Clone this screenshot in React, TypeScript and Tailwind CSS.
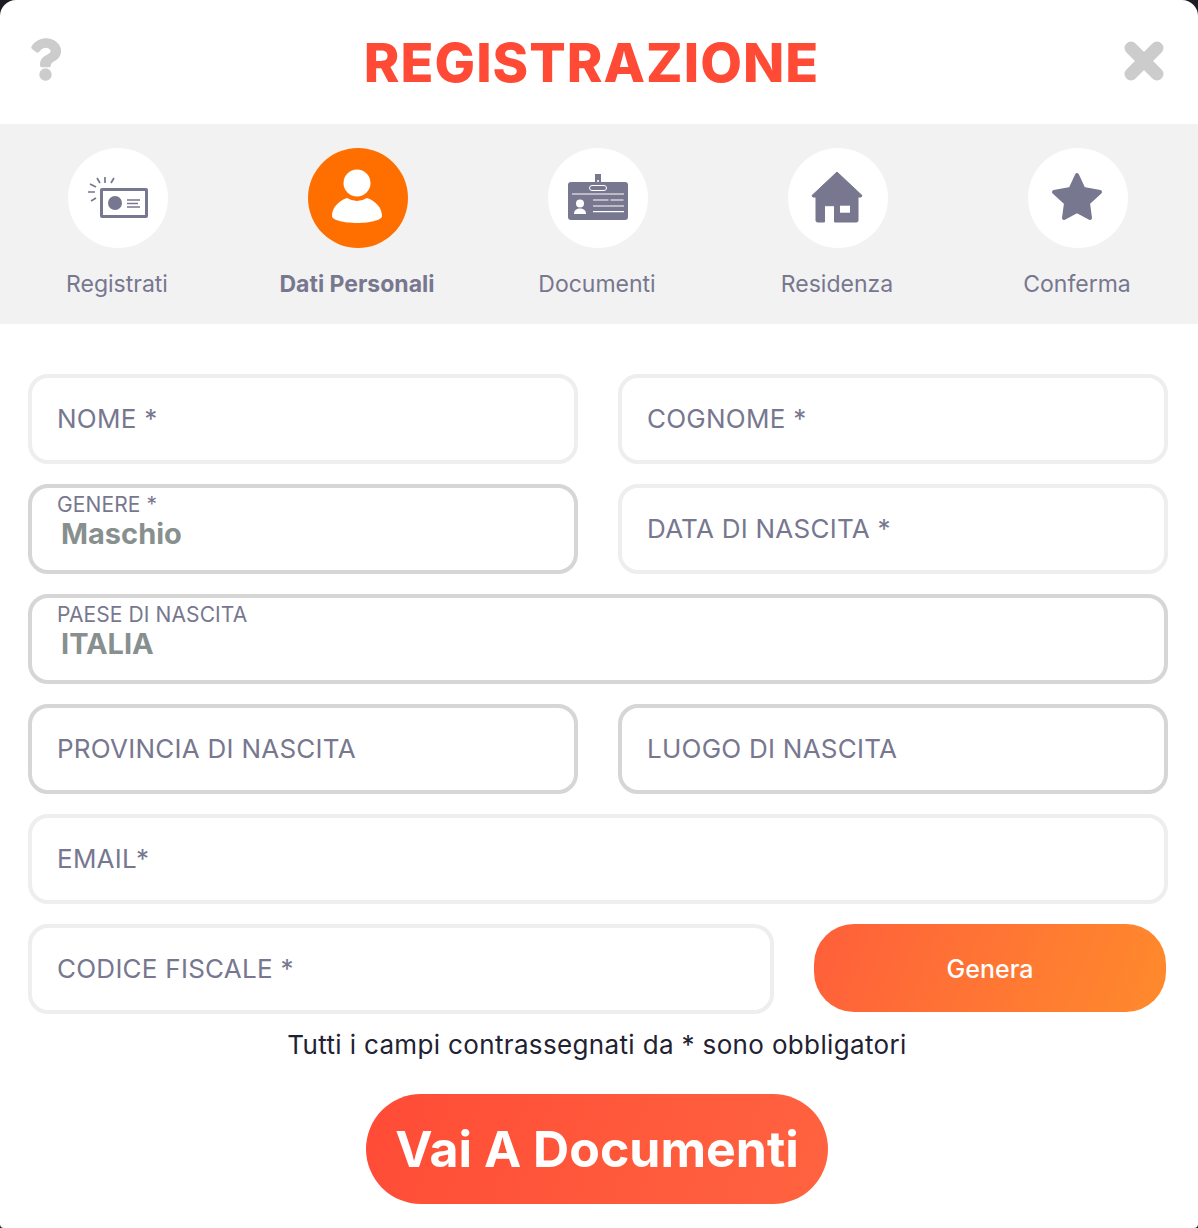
import { FaQuestion } from 'react-icons/fa';

const steps = ['Registrati', 'Dati Personali', 'Documenti', 'Residenza', 'Conferma'];

function RegistratiIcon() {
  return (
    <svg viewBox="0 0 100 100" className="w-[100px] h-[100px]" fill="none" stroke="#77778f">
      <rect x="33.5" y="41.5" width="45" height="27" rx="0.5" strokeWidth="3" />
      <circle cx="47" cy="55" r="7" fill="#77778f" stroke="none" />
      <path d="M59 52h13M59 55.5h11M59 59h13" strokeWidth="1.5" />
      <path d="M37 29v6M29 30l3 5M46 30l-3 5M22 36l6 3M20 44h7M23 53l5-3" strokeWidth="1.7" />
    </svg>
  );
}

function UserIcon() {
  return (
    <svg viewBox="0 0 100 100" className="w-[100px] h-[100px]" fill="#fff">
      <circle cx="49" cy="35" r="13.5" />
      <path d="M39 50Q49 56 59 50C68 53 74 60 74 68C74 72 62 75 49 75C36 75 24 72 24 68C24 60 30 53 39 50Z" />
    </svg>
  );
}

function DocumentIcon() {
  return (
    <svg viewBox="0 0 100 100" className="w-[100px] h-[100px]">
      <rect x="20" y="34" width="60" height="38" rx="3" fill="#77778f" />
      <rect x="47" y="26" width="6" height="12" fill="#77778f" />
      <rect x="49.2" y="32" width="1.6" height="2" fill="#fff" />
      <rect x="41.5" y="37.5" width="17" height="5" rx="2.5" fill="#77778f" stroke="#fff" strokeWidth="1" />
      <path d="M24 46h52M45 52h15.5M62.5 52h13M45 58h31M45 63.7h31" stroke="#fff" strokeWidth="1.2" fill="none" />
      <circle cx="32" cy="55.5" r="4" fill="#fff" />
      <path d="M26 66C26 62 29 60.5 32 60.5C35 60.5 38 62 38 66Z" fill="#fff" />
    </svg>
  );
}

function HomeIcon() {
  return (
    <svg viewBox="0 0 100 100" className="w-[100px] h-[100px]" fill="#77778f">
      <path d="M49 24L74 47.5L73 49L70 49V72.5Q70 74 68.5 74H46.5V57.7H36.5V74H29.5Q28 74 28 72.5V49L25 49L24 47.5Z" stroke="#77778f" strokeLinejoin="round" />
      <rect x="52" y="57.7" width="10" height="7" fill="#fff" />
    </svg>
  );
}

function StarIcon() {
  return (
    <svg viewBox="0 0 100 100" className="w-[100px] h-[100px]" fill="#77778f" stroke="#77778f" strokeWidth="4" strokeLinejoin="round">
      <path d="M49 27L55.5 41L72 44L60 55L62 70L49 63L36 70L38 55L26 44L42.5 41Z" />
    </svg>
  );
}

const icons = [RegistratiIcon, UserIcon, DocumentIcon, HomeIcon, StarIcon];

function Field({ label, value, strong, className }: { label: string; value?: string; strong?: boolean; className?: string }) {
  return (
    <div className={`h-[90px] rounded-[20px] border-4 pl-[25px] bg-white ${strong ? 'border-[#d6d6d6]' : 'border-[#eeeeee]'} ${className ?? ''}`}>
      {value ? (
        <div className="flex flex-col pt-[5px]">
          <span className="text-[21px] leading-[24px] text-[#77778f] tracking-[0.1px]">{label}</span>
          <span className="ml-[4px] text-[29px] leading-[33px] font-bold text-[#87908f]">{value}</span>
        </div>
      ) : (
        <div className="h-full flex items-center pb-[2px] text-[26px] text-[#77778f] tracking-[0.25px]">{label}</div>
      )}
    </div>
  );
}

export default function App() {
  return (
    <div className="w-[1198px] h-[1228px] bg-[#1b1c26] font-['Inter',sans-serif] overflow-hidden">
      <div className="w-full h-full bg-white rounded-t-[16px] rounded-b-[4px] overflow-hidden">
        <div className="h-[124px] flex items-center justify-between pl-[30px] pr-[34px]">
          <FaQuestion className="w-[31px] h-[43px] text-[#cccccc] mb-[5px]" stroke="currentColor" strokeWidth="16" />
          <h1 className="text-[54px] tracking-[1px] font-extrabold text-[#ff4a36] leading-none mr-[2px] pt-[2px]">REGISTRAZIONE</h1>
          <svg viewBox="0 0 40 40" className="w-[40px] h-[40px] mb-[2px]" stroke="#cccccc" strokeWidth="13" strokeLinecap="round">
            <path d="M7 7L33 33M33 7L7 33" />
          </svg>
        </div>

        <div className="h-[200px] bg-[#f2f2f2] pt-[24px] flex ml-[-2px] w-[1200px]">
          {steps.map((step, i) => {
            const Icon = icons[i];
            return (
              <div key={step} className="w-[240px] flex flex-col items-center">
                <div className={`w-[100px] h-[100px] rounded-full ${i === 1 ? 'bg-[#ff6f00]' : 'bg-white'}`}>
                  <Icon />
                </div>
                <span className={`mt-[22px] mr-[2px] text-[23px] leading-[28px] text-[#77778f] ${i === 1 ? 'font-bold' : ''}`}>{step}</span>
              </div>
            );
          })}
        </div>

        <div className="px-[28px] pt-[50px] pr-[30px] flex flex-col gap-[20px]">
          <div className="grid grid-cols-2 gap-[40px]">
            <Field label="NOME *" />
            <Field label="COGNOME *" />
          </div>
          <div className="grid grid-cols-2 gap-[40px]">
            <Field label="GENERE *" value="Maschio" strong />
            <Field label="DATA DI NASCITA *" />
          </div>
          <Field label="PAESE DI NASCITA" value="ITALIA" strong />
          <div className="grid grid-cols-2 gap-[40px]">
            <Field label="PROVINCIA DI NASCITA" strong />
            <Field label="LUOGO DI NASCITA" strong />
          </div>
          <Field label="EMAIL*" />
          <div className="flex gap-[40px]">
            <Field label="CODICE FISCALE *" className="w-[746px]" />
            <button className="w-[352px] h-[88px] rounded-[40px] bg-linear-110 from-[#ff5e3a] to-[#ff8a2b] text-white text-[25px] font-medium pt-[4px]">
              Genera
            </button>
          </div>
        </div>

        <p className="mt-[14px] text-center text-[26px] tracking-[0.35px] leading-[34px] text-[#1f2233] pr-[4px]">
          Tutti i campi contrassegnati da * sono obbligatori
        </p>

        <div className="mt-[32px] flex justify-center pr-[4px]">
          <button className="w-[462px] h-[110px] rounded-[55px] bg-linear-110 from-[#ff4b36] to-[#ff6340] text-white text-[50px] font-bold">
            Vai A Documenti
          </button>
        </div>
      </div>
    </div>
  );
}
